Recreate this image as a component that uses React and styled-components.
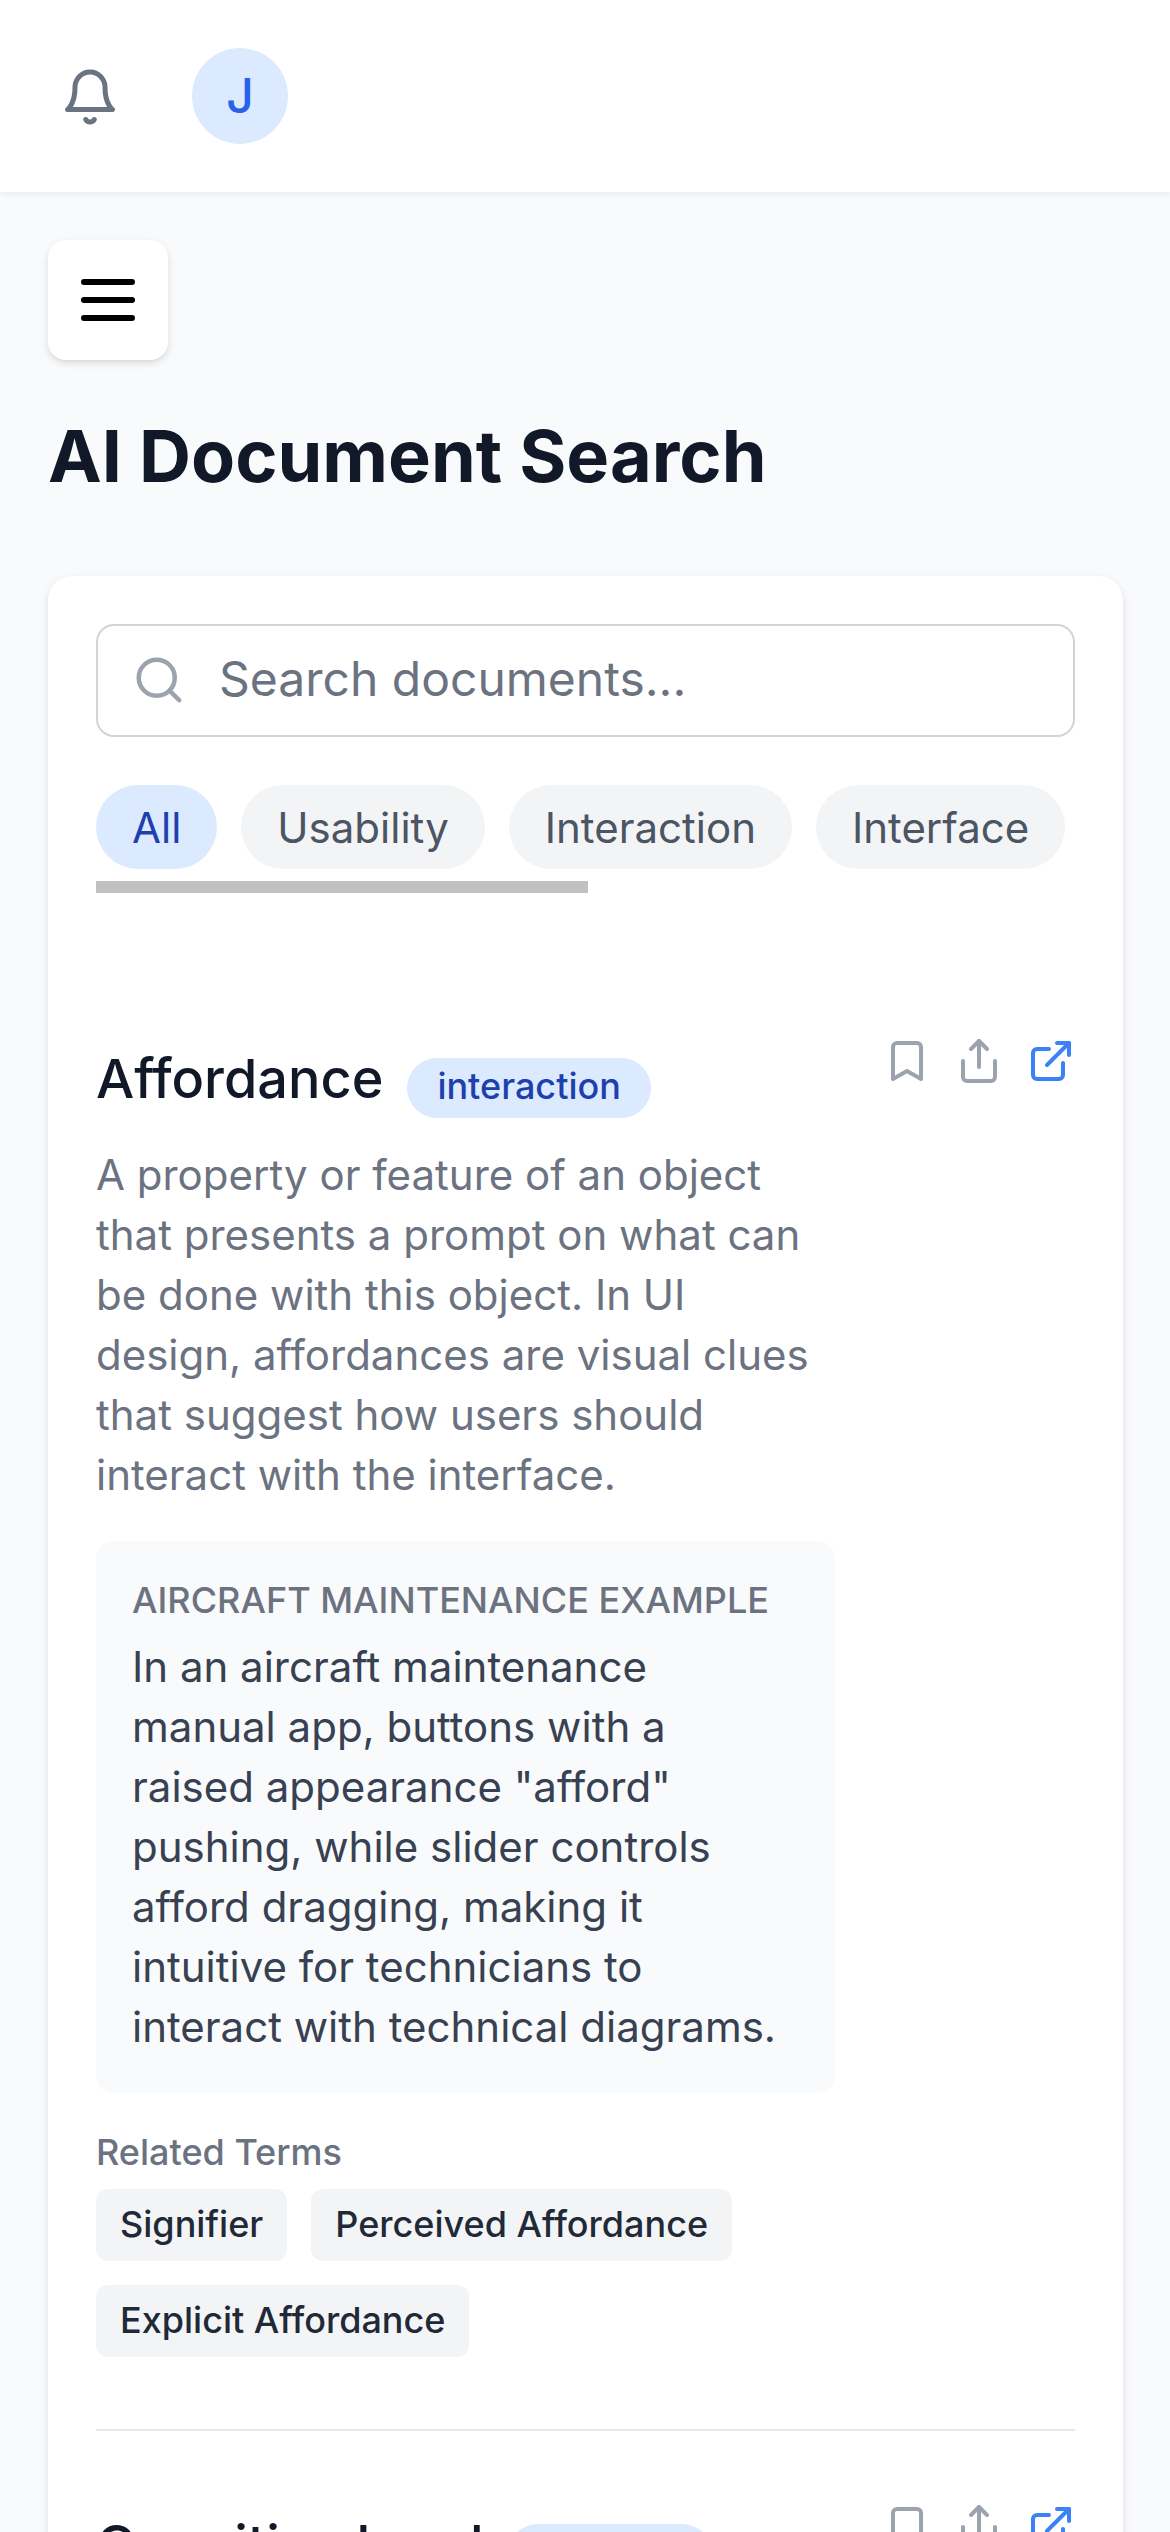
import React from "react";
import styled, { createGlobalStyle } from "styled-components";

const GlobalStyle = createGlobalStyle`
  *, *::before, *::after { box-sizing: border-box; }
  html, body { margin: 0; padding: 0; background: #f9fafb; }
  body {
    font-family: Inter, "Liberation Sans", sans-serif;
    -webkit-font-smoothing: antialiased;
  }
  h1, h2, h4, p, ul { margin: 0; padding: 0; font-weight: inherit; }
  ul { list-style: none; }
  button { font: inherit; border: 0; margin: 0; cursor: pointer; }
`;

const cardShadow =
  "0 3px 9px 0 rgba(0, 0, 0, 0.1), 0 3px 6px -3px rgba(0, 0, 0, 0.1)";

const Screen = styled.div`
  width: 1170px;
  height: 2532px;
  overflow: hidden;
  background: #f9fafb;
  color: #111827;
`;

const Header = styled.header`
  display: flex;
  align-items: center;
  gap: 60px;
  height: 192px;
  padding: 0 48px;
  background: #ffffff;
  box-shadow: 0 3px 6px 0 rgba(0, 0, 0, 0.05);
`;

const IconButton = styled.button`
  display: flex;
  padding: ${(p) => p.$padding || "0"};
  background: transparent;
  color: ${(p) => p.$color};
`;

const Avatar = styled.div`
  display: flex;
  align-items: center;
  justify-content: center;
  width: 96px;
  height: 96px;
  border-radius: 50%;
  background: #dbeafe;
  color: #2563eb;
  font-size: 48px;
  line-height: 72px;
  font-weight: 500;
`;

const Main = styled.main`
  display: flex;
  flex-direction: column;
  align-items: flex-start;
  padding: 48px 47px 0 48px;
`;

const MenuButton = styled.button`
  display: flex;
  padding: 24px;
  border-radius: 18px;
  background: #ffffff;
  color: #000000;
  box-shadow: ${cardShadow};
`;

const PageTitle = styled.h1`
  margin: 48px 0 72px;
  font-size: 72px;
  line-height: 96px;
  font-weight: 700;
`;

const Card = styled.section`
  width: 100%;
  padding: 48px 48px 72px;
  border-radius: 24px;
  background: #ffffff;
  box-shadow: ${cardShadow};
`;

const SearchBox = styled.label`
  display: flex;
  align-items: center;
  gap: 33px;
  height: 112.5px;
  padding: 0 34px;
  border: 2px solid #d1d5db;
  border-radius: 18px;
  color: #9ca3af;
`;

const SearchInput = styled.input`
  flex: 1;
  min-width: 0;
  padding: 0 0 2px;
  border: 0;
  outline: 0;
  background: transparent;
  font: 400 48px/72px Inter, "Liberation Sans", sans-serif;
  color: #111827;
  &::placeholder { color: #6b7280; opacity: 1; }
`;

const FilterRow = styled.div`
  display: flex;
  gap: 24px;
  margin-top: 48px;
  padding-bottom: 12px;
  overflow: hidden;
`;

const Pill = styled.button`
  flex: none;
  padding: 13px 36px 11px;
  border-radius: 42px;
  font-size: 42px;
  line-height: 60px;
  background: ${(p) => (p.$active ? "#dbeafe" : "#f3f4f6")};
  color: ${(p) => (p.$active ? "#1e40af" : "#4b5563")};
`;

const ScrollTrack = styled.div`
  height: 12px;
  margin-bottom: 72px;
`;

const ScrollThumb = styled.div`
  width: 492px;
  height: 12px;
  background: #c1c1c1;
`;

const Item = styled.li`
  display: flex;
  align-items: flex-start;
  gap: 48px;
  padding: 72px 0;
  & + & { border-top: 2px solid #e5e7eb; }
`;

const ItemBody = styled.div`
  flex: 1;
  min-width: 0;
`;

const Actions = styled.div`
  display: flex;
  gap: 24px;
`;

const TitleRow = styled.div`
  display: flex;
  align-items: flex-start;
  gap: 24px;
`;

const ItemTitle = styled.h2`
  font-size: 54px;
  line-height: 84px;
  font-weight: 500;
`;

const Badge = styled.span`
  margin-top: 21px;
  padding: 4px 30px 8px;
  border-radius: 30px;
  background: #dbeafe;
  color: #1e40af;
  font-size: 36px;
  line-height: 48px;
  font-weight: 500;
`;

const Definition = styled.p`
  margin-top: 24px;
  font-size: 42px;
  line-height: 60px;
  color: #6b7280;
`;

const Example = styled.div`
  margin-top: 36px;
  padding: 35px 36px 36px;
  border-radius: 18px;
  background: #f9fafb;
`;

const SmallHeading = styled.h4`
  margin-bottom: 13px;
  font-size: 36px;
  line-height: 48px;
  font-weight: 500;
  color: #6b7280;
  text-transform: ${(p) => (p.$upper ? "uppercase" : "none")};
`;

const ExampleText = styled.p`
  font-size: 42px;
  line-height: 60px;
  color: #374151;
`;

const Related = styled.div`
  margin-top: 35px;
`;

const Chips = styled.div`
  display: flex;
  flex-wrap: wrap;
  gap: 24px;
`;

const Chip = styled.span`
  padding: 11px 24px 13px;
  border-radius: 12px;
  background: #f3f4f6;
  color: #1f2937;
  font-size: 36px;
  line-height: 48px;
  font-weight: 500;
`;

const IconSvg = styled.svg`
  display: block;
  flex: none;
`;

const Icon = ({ size, children }) => (
  <IconSvg
    width={size}
    height={size}
    viewBox="0 0 24 24"
    fill="none"
    stroke="currentColor"
    strokeWidth="2"
    strokeLinecap="round"
    strokeLinejoin="round"
    aria-hidden="true"
  >
    {children}
  </IconSvg>
);

const BellIcon = () => (
  <Icon size={60}>
    <path d="M6 8a6 6 0 0 1 12 0c0 7 3 9 3 9H3s3-2 3-9" />
    <path d="M10.3 21a1.94 1.94 0 0 0 3.4 0" />
  </Icon>
);

const MenuIcon = () => (
  <Icon size={72}>
    <path d="M4 6h16M4 12h16M4 18h16" />
  </Icon>
);

const SearchIcon = () => (
  <Icon size={54}>
    <circle cx="11" cy="11" r="8" />
    <path d="m21 21-4.3-4.3" />
  </Icon>
);

const BookmarkIcon = () => (
  <Icon size={48}>
    <path d="m19 21-7-4-7 4V5a2 2 0 0 1 2-2h10a2 2 0 0 1 2 2v16z" />
  </Icon>
);

const ShareIcon = () => (
  <Icon size={48}>
    <path d="M4 12v8a2 2 0 0 0 2 2h12a2 2 0 0 0 2-2v-8" />
    <path d="m16 6-4-4-4 4" />
    <path d="M12 2v13" />
  </Icon>
);

const ExternalIcon = () => (
  <Icon size={48}>
    <path d="M15 3h6v6" />
    <path d="M10 14 21 3" />
    <path d="M18 13v6a2 2 0 0 1-2 2H5a2 2 0 0 1-2-2V8a2 2 0 0 1 2-2h6" />
  </Icon>
);

const filters = ["All", "Usability", "Interaction", "Interface"];

const terms = [
  {
    title: "Affordance",
    category: "interaction",
    definition:
      "A property or feature of an object that presents a prompt on what can be done with this object. In UI design, affordances are visual clues that suggest how users should interact with the interface.",
    example:
      'In an aircraft maintenance manual app, buttons with a raised appearance "afford" pushing, while slider controls afford dragging, making it intuitive for technicians to interact with technical diagrams.',
    related: ["Signifier", "Perceived Affordance", "Explicit Affordance"],
  },
  { title: "Cognitive Load", category: "usability" },
];

const TermItem = ({ term }) => (
  <Item>
    <ItemBody>
      <TitleRow>
        <ItemTitle>{term.title}</ItemTitle>
        <Badge>{term.category}</Badge>
      </TitleRow>
      {term.definition && <Definition>{term.definition}</Definition>}
      {term.example && (
        <Example>
          <SmallHeading $upper>Aircraft Maintenance Example</SmallHeading>
          <ExampleText>{term.example}</ExampleText>
        </Example>
      )}
      {term.related && (
        <Related>
          <SmallHeading>Related Terms</SmallHeading>
          <Chips>
            {term.related.map((name) => (
              <Chip key={name}>{name}</Chip>
            ))}
          </Chips>
        </Related>
      )}
    </ItemBody>
    <Actions>
      <IconButton $color="#9ca3af" aria-label="Bookmark"><BookmarkIcon /></IconButton>
      <IconButton $color="#9ca3af" aria-label="Share"><ShareIcon /></IconButton>
      <IconButton $color="#3b82f6" aria-label="Open"><ExternalIcon /></IconButton>
    </Actions>
  </Item>
);

export default function App() {
  return (
    <Screen>
      <GlobalStyle />
      <Header>
        <IconButton $color="#6b7280" $padding="2px 12px 0" aria-label="Notifications">
          <BellIcon />
        </IconButton>
        <Avatar>J</Avatar>
      </Header>
      <Main>
        <MenuButton aria-label="Menu"><MenuIcon /></MenuButton>
        <PageTitle>AI Document Search</PageTitle>
        <Card>
          <SearchBox>
            <SearchIcon />
            <SearchInput placeholder="Search documents..." />
          </SearchBox>
          <FilterRow>
            {filters.map((name, i) => (
              <Pill key={name} $active={i === 0}>{name}</Pill>
            ))}
          </FilterRow>
          <ScrollTrack><ScrollThumb /></ScrollTrack>
          <ul>
            {terms.map((term) => (
              <TermItem key={term.title} term={term} />
            ))}
          </ul>
        </Card>
      </Main>
    </Screen>
  );
}
